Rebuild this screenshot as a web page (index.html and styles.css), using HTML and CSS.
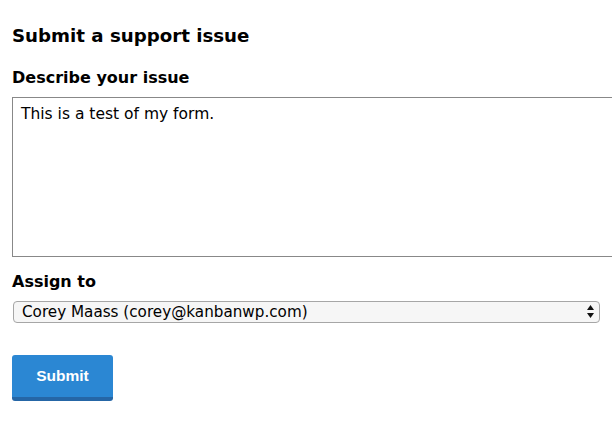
FILE: index.html
```html
<!DOCTYPE html>
<html lang="en">
<head>
    <meta charset="UTF-8">
    <meta name="viewport" content="width=device-width, initial-scale=1.0">
    <title>Submit a support issue</title>
    <link rel="stylesheet" href="styles.css">
</head>
<body>

    <div class="support-form">
        <h3>Submit a support issue</h3>

        <div class="field">
            <label for="issue">Describe your issue</label>
            <textarea id="issue" rows="8">This is a test of my form.</textarea>
        </div>

        <div class="field">
            <label for="assignee">Assign to</label>
            <div class="select-wrap">
                <select id="assignee">
                    <option value="1">Corey Maass (corey@kanbanwp.com)</option>
                </select>
                <svg class="select-arrows" width="7" height="13" viewBox="0 0 7 13">
                    <path d="M3.5 0 L7 5 L0 5 Z" fill="#111"/>
                    <path d="M0 8 L7 8 L3.5 13 Z" fill="#111"/>
                </svg>
            </div>
        </div>

        <button type="submit" class="button-primary">Submit</button>
    </div>

</body>
</html>
```

FILE: styles.css
```css
html {
    overflow: hidden;
}
body {
    margin: 0;
    padding: 24px 12px 0;
    font-family: "DejaVu Sans", Verdana, sans-serif;
    color: #000;
    background: #fff;
}
.support-form {
    width: 640px;
    display: flex;
    flex-direction: column;
    align-items: flex-start;
}
h3 {
    font-size: 18.2px;
    font-weight: bold;
    margin: 0 0 20px;
    line-height: 24px;
}
.field {
    margin-bottom: 15px;
}
label {
    display: block;
    font-size: 16px;
    font-weight: bold;
    line-height: 20px;
    margin-bottom: 9px;
}
textarea {
    display: block;
    box-sizing: border-box;
    width: 620px;
    height: 160px;
    margin: 0;
    padding: 7px 8px;
    border: 1px solid #888;
    font-family: "DejaVu Sans", Verdana, sans-serif;
    font-size: 15.5px;
    line-height: 18px;
    color: #000;
    resize: none;
}
.select-wrap {
    position: relative;
    width: 587px;
    margin-left: 1px;
}
select {
    display: block;
    box-sizing: border-box;
    width: 100%;
    height: 22px;
    padding: 0 0 0 8px;
    border: 1px solid #a6a6a6;
    border-radius: 4px;
    background: #f6f6f6;
    font-family: "DejaVu Sans", Verdana, sans-serif;
    font-size: 15.2px;
    color: #000;
    -webkit-appearance: none;
    appearance: none;
}
.select-arrows {
    position: absolute;
    right: 6px;
    top: 4px;
}
.button-primary {
    margin-top: 17px;
    width: 101px;
    height: 46px;
    border: none;
    border-bottom: 4px solid #2566a6;
    border-radius: 3px;
    background: #2b87d3;
    color: #fff;
    font-family: "Liberation Sans", Arial, sans-serif;
    font-size: 15.5px;
    font-weight: bold;
    cursor: pointer;
}
```
